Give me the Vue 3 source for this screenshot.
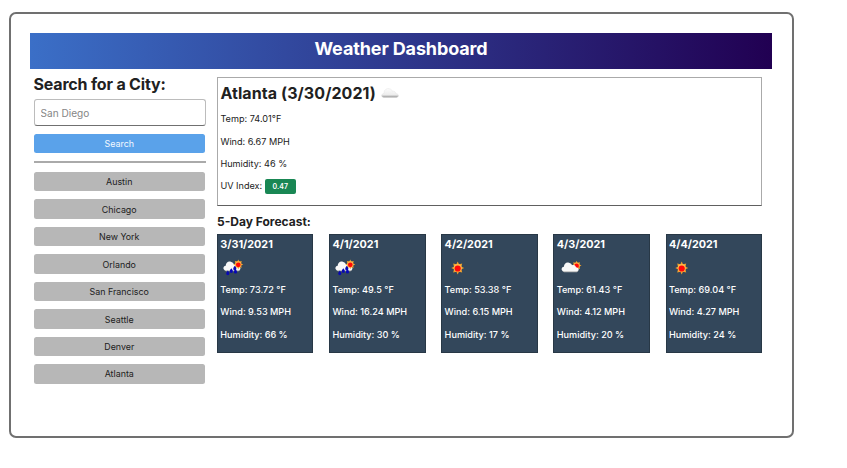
<script setup>
import { ref, h } from 'vue'

const query = ref('')
const cities = ['Austin', 'Chicago', 'New York', 'Orlando', 'San Francisco', 'Seattle', 'Denver', 'Atlanta']
const forecast = [
  { date: '3/31/2021', icon: 'rain', temp: '73.72', wind: '9.53', humidity: 66 },
  { date: '4/1/2021', icon: 'rain', temp: '49.5', wind: '16.24', humidity: 30 },
  { date: '4/2/2021', icon: 'sun', temp: '53.38', wind: '6.15', humidity: 17 },
  { date: '4/3/2021', icon: 'partly', temp: '61.43', wind: '4.12', humidity: 20 },
  { date: '4/4/2021', icon: 'sun', temp: '69.04', wind: '4.27', humidity: 24 }
]

const sunAt = (x, y, s) =>
  h('g', { transform: `translate(${x} ${y}) scale(${s})` }, [
    h('path', {
      fill: '#f0a02c',
      d: 'M0-6.5 1.3-3.7 4.5-4.5 3.7-1.3 6.5 0 3.7 1.3 4.5 4.5 1.3 3.7 0 6.5-1.3 3.7-4.5 4.5-3.7 1.3-6.5 0-3.7-1.3-4.5-4.5-1.3-3.7Z'
    }),
    h('circle', { r: 4, fill: '#ffb84a' }),
    h('circle', { r: 3.1, cy: 0.5, fill: '#ff0808' })
  ])

const cloudAt = (x, y) =>
  h('g', { transform: `translate(${x} ${y})` }, [
    h('path', { fill: '#b9b9b9', d: 'M1 6H16.8Q18 9 15.5 10H3Q.5 9.6 1 6Z' }),
    h('path', {
      fill: '#f8f8f8',
      d: 'M3 9C-.5 9-.2 4.9 2.7 4.5 2.8 1.5 5.2-.3 7.8.6 9.5 1 10.5 2.1 10.8 3.1 13.2 2.1 14.5 3.6 14.8 5 18.3 5 18.2 9 15.2 9Z'
    })
  ])

const drop = (x, y) =>
  h('path', { fill: '#0808b5', transform: `translate(${x} ${y})`, d: 'M0-2.4Q1.7-.2 1.6.6A1.6 1.6 0 0 1-1.6.6Q-1.7-.2 0-2.4Z' })

const WeatherIcon = ({ kind }) => {
  const parts = {
    sun: () => [sunAt(14.7, 10, 1)],
    partly: () => [sunAt(21.6, 7.6, 0.76), cloudAt(6.2, 4.2)],
    rain: () => [cloudAt(5, 3.2), sunAt(20.3, 6.4, 0.76), drop(9.8, 15), drop(13.3, 12.7), drop(17.5, 13.4), drop(16.8, 10.2)]
  }[kind]()
  return h('svg', { viewBox: '0 0 30 20', width: 30, height: 20, 'aria-hidden': 'true' }, parts)
}
</script>

<template>
  <div class="frame">
    <header class="banner"><h1>Weather Dashboard</h1></header>
    <div class="layout">
      <aside class="sidebar">
        <h2>Search for a City:</h2>
        <input v-model="query" type="text" placeholder="San Diego" />
        <button class="search">Search</button>
        <hr />
        <div class="cities">
          <button v-for="city in cities" :key="city">{{ city }}</button>
        </div>
      </aside>
      <main class="content">
        <section class="current">
          <h2>
            <span>Atlanta (3/30/2021)</span>
            <svg class="cloud" viewBox="0 0 18 10" width="18" height="10" aria-hidden="true">
              <defs>
                <linearGradient id="cloud-shade" x1="0" y1="0" x2="0" y2="1">
                  <stop offset="0" stop-color="#fcfcfc" />
                  <stop offset=".7" stop-color="#ededed" />
                  <stop offset="1" stop-color="#8f8f8f" />
                </linearGradient>
              </defs>
              <path fill="url(#cloud-shade)" stroke="#dedede" stroke-width=".4" d="M3 9.5C-.3 9.2 0 5.7 3 5.4 3 1.8 5.5.2 8.2.7 10 .9 11 2 11.2 3.3 13.5 2.7 14.7 4 14.9 5.5 18.3 5.7 18.2 9.5 15.2 9.5Z" />
            </svg>
          </h2>
          <p>Temp: 74.01°F</p>
          <p>Wind: 6.67 MPH</p>
          <p>Humidity: 46 %</p>
          <p>UV Index: <span class="uv">0.47</span></p>
        </section>
        <h3>5-Day Forecast:</h3>
        <section class="forecast">
          <article v-for="day in forecast" :key="day.date" class="card">
            <h4>{{ day.date }}</h4>
            <WeatherIcon :kind="day.icon" />
            <p>Temp: {{ day.temp }} °F</p>
            <p>Wind: {{ day.wind }} MPH</p>
            <p>Humidity: {{ day.humidity }} %</p>
          </article>
        </section>
      </main>
    </div>
  </div>
</template>

<style>
body {
  background: #fff;
}
</style>

<style scoped>
.frame {
  box-sizing: border-box;
  width: 785px;
  height: 426px;
  margin: 12px 0 0 9px;
  padding: 19px 20px 0 19px;
  border: 2px solid #707070;
  border-radius: 7px;
  font-family: Inter, "Liberation Sans", sans-serif;
  font-size: 9.15px;
  color: #212121;
}
h1, h2, h3, h4, p {
  margin: 0;
  white-space: nowrap;
}
.banner {
  height: 36px;
  background: linear-gradient(90deg, #3b6fc7, #210052);
  color: #fff;
  text-align: center;
}
h1 {
  font-size: 18px;
  line-height: 31px;
  font-weight: 700;
  letter-spacing: -.13px;
}
.layout {
  display: flex;
  gap: 11.5px;
  padding: 0 10px 0 3.5px;
}
.sidebar {
  width: 172px;
  display: flex;
  flex-direction: column;
}
.sidebar h2 {
  font-size: 16px;
  font-weight: 700;
  line-height: 20px;
  margin-top: 5px;
  letter-spacing: -.18px;
}
input {
  box-sizing: border-box;
  width: 172px;
  height: 27px;
  margin-top: 5px;
  padding: 0 6px;
  border: 1px solid #bcbcbc;
  border-bottom-color: #707070;
  border-radius: 3px;
  font: 10.1px Inter, sans-serif;
}
input::placeholder {
  color: #868686;
}
button {
  width: 171.5px;
  height: 19.2px;
  padding: 0;
  border: 0;
  border-radius: 2.5px;
  background: #b7b7b7;
  color: #212121;
  font: 8.9px Inter, sans-serif;
}
.search {
  margin-top: 8px;
  background: #5aa2ea;
  color: #f2f8ff;
}
hr {
  width: 172.5px;
  height: 2px;
  margin: 7.8px 0 9px;
  border: 0;
  background: #aaa;
}
.cities {
  display: grid;
  gap: 8.3px;
}
.content {
  width: 545px;
  padding-top: 8px;
}
.current {
  box-sizing: border-box;
  height: 129px;
  padding: 4px 2.4px 0;
  border: 1px solid #aaa;
  border-bottom-color: #606060;
}
.current h2 {
  display: flex;
  align-items: center;
  gap: 5px;
  font-size: 16px;
  letter-spacing: .08px;
  line-height: 22px;
  margin-bottom: 4.4px;
}
.current p {
  height: 22.3px;
  line-height: 22px;
}
.uv {
  display: inline-block;
  width: 31px;
  height: 15px;
  border-radius: 2px;
  background: #198754;
  color: #fff;
  font-size: 7px;
  font-weight: 600;
  line-height: 15px;
  text-align: center;
  vertical-align: middle;
}
h3 {
  font-size: 12px;
  font-weight: 700;
  line-height: 16px;
  margin: 8px 0 4px;
}
.forecast {
  display: grid;
  grid-template-columns: repeat(5, 1fr);
  gap: 15.8px;
}
.card {
  box-sizing: border-box;
  height: 119px;
  padding: 2px 0 0 2.3px;
  border: 1px solid #283846;
  background: #33475b;
  color: #fff;
  font-weight: 500;
}
h4 {
  font-size: 10.8px;
  font-weight: 700;
  line-height: 15px;
}
.card svg {
  display: block;
  margin: 6px 0 1px -2px;
}
.card p {
  height: 22.4px;
  line-height: 22px;
}
</style>
